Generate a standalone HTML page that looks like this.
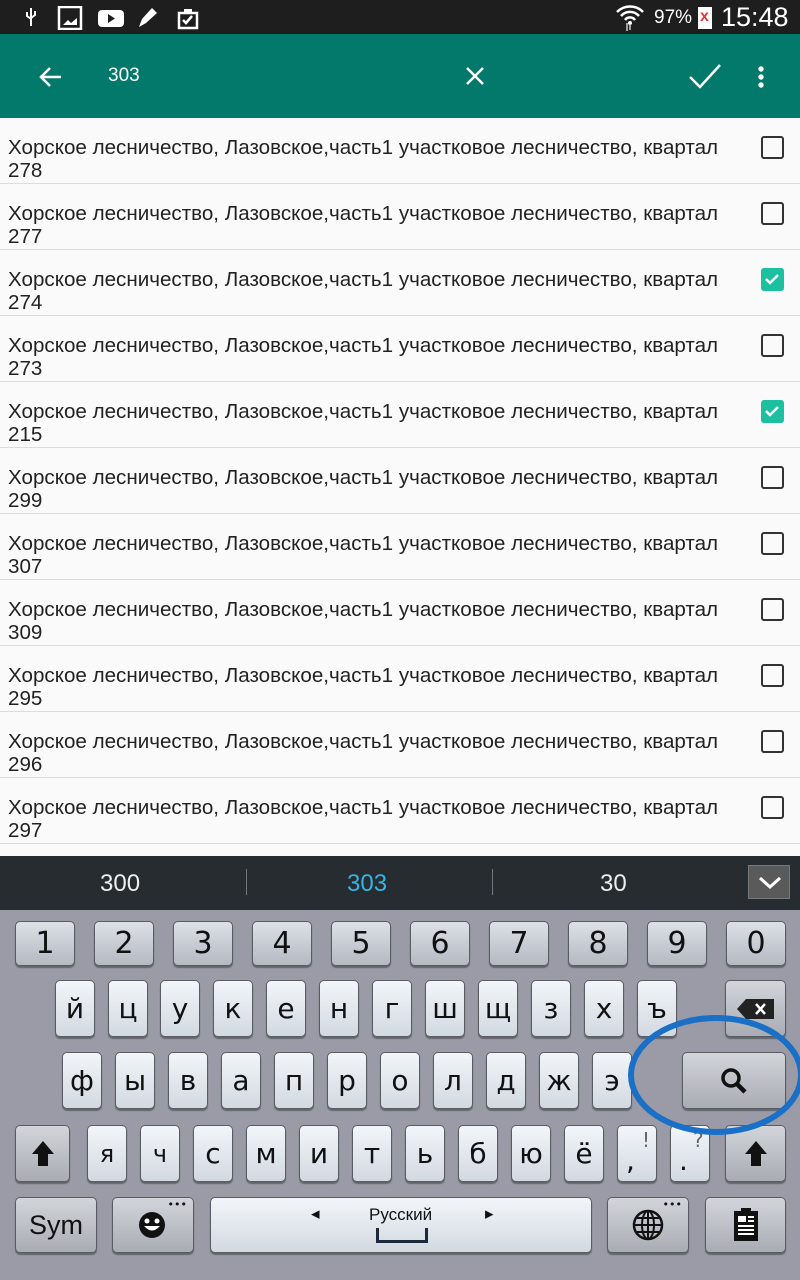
<!DOCTYPE html>
<html><head><meta charset="utf-8"><style>
*{margin:0;padding:0;box-sizing:border-box}
body{width:800px;height:1280px;overflow:hidden;background:#fafafa;font-family:"Liberation Sans","DejaVu Sans",sans-serif;position:relative}
.abs{position:absolute}
#sb{left:0;top:0;width:800px;height:34px;background:#1e1e1e;color:#fff}
#tb{left:0;top:34px;width:800px;height:84px;background:#02796b;color:#fff}
.row{position:absolute;left:0;width:800px;height:66px;border-bottom:1px solid #ddd}
.row .t{position:absolute;left:8px;top:18px;font-size:20.6px;line-height:23px;color:#222;width:728px}
.cb{position:absolute;left:761px;top:18px;width:23px;height:23px;border:2.5px solid #333;border-radius:3px}
.cb.on{background:#1cbf9f;border-color:#1cbf9f}
#sug{left:0;top:856px;width:800px;height:54px;background:#272c30}
#kb{left:0;top:910px;width:800px;height:370px;background:#9a9ba6}
.k{position:absolute;border:1px solid #5a5c64;border-radius:5px;box-shadow:0 2px 1px rgba(0,0,0,.35);display:flex;align-items:center;justify-content:center;color:#111;font-family:"DejaVu Sans",sans-serif}
.n{background:linear-gradient(#dde1e7,#b4b9c2);font-size:30px;height:45px;width:60px}
.l{background:linear-gradient(#f2f6fa,#d3d9e1);font-size:28px;width:40px;height:57px}
.f{background:linear-gradient(#d2d5da,#a9acb3)}
</style></head><body>
<div id="sb" class="abs">
 <svg class="abs" style="left:20px;top:6px" width="200" height="24" viewBox="0 0 200 24" fill="#fff">
  <path d="M11 2v18M7 6v4l4 3M15 5v4l-4 3" stroke="#fff" stroke-width="2" fill="none"/>
  <rect x="39" y="1" width="22" height="22" fill="none" stroke="#fff" stroke-width="2.5"/><path d="M43 19l5-5 3 3 6-5v7z"/>
  <rect x="78" y="4" width="26" height="17" rx="4"/><path d="M88 8v9l7-4.5z" fill="#1e1e1e"/>
  <path d="M119 21l3-8 10-11 5 5-11 10z"/>
  <rect x="159" y="7" width="18" height="15" fill="none" stroke="#fff" stroke-width="2.5"/><path d="M163 14l3 3 6-7" stroke="#fff" stroke-width="2.5" fill="none"/><rect x="164" y="3" width="8" height="4"/>
 </svg>
 <svg class="abs" style="left:615px;top:3px" width="30" height="28" viewBox="0 0 30 28"><path d="M2 9a18 18 0 0 1 26 0M6 13a12 12 0 0 1 18 0M10 17a6 6 0 0 1 10 0" stroke="#fff" stroke-width="2.5" fill="none"/><circle cx="15" cy="20" r="2" fill="#fff"/><path d="M12 20v8M15 27v-6" stroke="#ccc" stroke-width="1.5"/></svg>
 <div class="abs" style="left:654px;top:7px;font-size:19px">97%</div>
 <div class="abs" style="left:698px;top:7px;width:14px;height:22px;background:#fff"><span style="color:#e33;font-size:16px;font-weight:bold;position:absolute;left:2px;top:1px">x</span></div>
 <div class="abs" style="left:721px;top:2px;font-size:27px">15:48</div>
</div>
<div id="tb" class="abs">
 <svg class="abs" style="left:38px;top:30px" width="26" height="26" viewBox="0 0 26 26"><path d="M23 13H4M12 4l-9 9 9 9" stroke="#fff" stroke-width="2.5" fill="none"/></svg>
 <div class="abs" style="left:108px;top:31px;font-size:19px">303</div>
 <svg class="abs" style="left:465px;top:32px" width="20" height="20"><path d="M2 2l16 16M18 2L2 18" stroke="#fff" stroke-width="2.5"/></svg>
 <svg class="abs" style="left:688px;top:28px" width="34" height="28"><path d="M2 15l10 10L32 3" stroke="#fff" stroke-width="2.5" fill="none"/></svg>
 <svg class="abs" style="left:756px;top:31px" width="10" height="26" fill="#fff"><circle cx="5" cy="4" r="2.7"/><circle cx="5" cy="12" r="2.7"/><circle cx="5" cy="20" r="2.7"/></svg>
</div>
<div class="row" style="top:118px"><div class="t">Хорское лесничество, Лазовское,часть1 участковое лесничество, квартал 278</div><div class="cb"></div></div>
<div class="row" style="top:184px"><div class="t">Хорское лесничество, Лазовское,часть1 участковое лесничество, квартал 277</div><div class="cb"></div></div>
<div class="row" style="top:250px"><div class="t">Хорское лесничество, Лазовское,часть1 участковое лесничество, квартал 274</div><div class="cb on"><svg width="18" height="18" style="position:absolute;left:0;top:0"><path d="M3 9l4 4 8-8" stroke="#fff" stroke-width="2.5" fill="none"/></svg></div></div>
<div class="row" style="top:316px"><div class="t">Хорское лесничество, Лазовское,часть1 участковое лесничество, квартал 273</div><div class="cb"></div></div>
<div class="row" style="top:382px"><div class="t">Хорское лесничество, Лазовское,часть1 участковое лесничество, квартал 215</div><div class="cb on"><svg width="18" height="18" style="position:absolute;left:0;top:0"><path d="M3 9l4 4 8-8" stroke="#fff" stroke-width="2.5" fill="none"/></svg></div></div>
<div class="row" style="top:448px"><div class="t">Хорское лесничество, Лазовское,часть1 участковое лесничество, квартал 299</div><div class="cb"></div></div>
<div class="row" style="top:514px"><div class="t">Хорское лесничество, Лазовское,часть1 участковое лесничество, квартал 307</div><div class="cb"></div></div>
<div class="row" style="top:580px"><div class="t">Хорское лесничество, Лазовское,часть1 участковое лесничество, квартал 309</div><div class="cb"></div></div>
<div class="row" style="top:646px"><div class="t">Хорское лесничество, Лазовское,часть1 участковое лесничество, квартал 295</div><div class="cb"></div></div>
<div class="row" style="top:712px"><div class="t">Хорское лесничество, Лазовское,часть1 участковое лесничество, квартал 296</div><div class="cb"></div></div>
<div class="row" style="top:778px"><div class="t">Хорское лесничество, Лазовское,часть1 участковое лесничество, квартал 297</div><div class="cb"></div></div>

<div id="sug" class="abs">
 <div class="abs" style="left:100px;top:14px;font-size:24px;color:#eee">300</div>
 <div class="abs" style="left:246px;top:13px;width:1px;height:26px;background:#777"></div>
 <div class="abs" style="left:347px;top:14px;font-size:24px;color:#33b5e5">303</div>
 <div class="abs" style="left:492px;top:13px;width:1px;height:26px;background:#777"></div>
 <div class="abs" style="left:600px;top:14px;font-size:24px;color:#eee">30</div>
 <div class="abs" style="left:748px;top:9px;width:42px;height:34px;background:#5a5a5a;border:1px solid #777"><svg width="42" height="34"><path d="M11 12l10 9 10-9" stroke="#fff" stroke-width="3" fill="none"/></svg></div>
</div>
<div id="kb" class="abs">
 <div class="k n" style="left:15px;top:11px">1</div><div class="k n" style="left:94px;top:11px">2</div><div class="k n" style="left:173px;top:11px">3</div><div class="k n" style="left:252px;top:11px">4</div><div class="k n" style="left:331px;top:11px">5</div><div class="k n" style="left:410px;top:11px">6</div><div class="k n" style="left:489px;top:11px">7</div><div class="k n" style="left:568px;top:11px">8</div><div class="k n" style="left:647px;top:11px">9</div><div class="k n" style="left:726px;top:11px">0</div>

 <div class="k l" style="left:55px;top:70px">й</div><div class="k l" style="left:108px;top:70px">ц</div><div class="k l" style="left:160px;top:70px">у</div><div class="k l" style="left:213px;top:70px">к</div><div class="k l" style="left:266px;top:70px">е</div><div class="k l" style="left:319px;top:70px">н</div><div class="k l" style="left:372px;top:70px">г</div><div class="k l" style="left:425px;top:70px">ш</div><div class="k l" style="left:478px;top:70px">щ</div><div class="k l" style="left:531px;top:70px">з</div><div class="k l" style="left:584px;top:70px">х</div><div class="k l" style="left:637px;top:70px">ъ</div>
 <div class="k f" style="left:725px;top:70px;width:61px;height:57px"><svg width="40" height="22"><path d="M10 1h28v20H10L1 11z" fill="#222"/><path d="M20 6l9 10M29 6l-9 10" stroke="#fff" stroke-width="2.5"/></svg></div>

 <div class="k l" style="left:62px;top:142px">ф</div><div class="k l" style="left:115px;top:142px">ы</div><div class="k l" style="left:168px;top:142px">в</div><div class="k l" style="left:221px;top:142px">а</div><div class="k l" style="left:274px;top:142px">п</div><div class="k l" style="left:327px;top:142px">р</div><div class="k l" style="left:380px;top:142px">о</div><div class="k l" style="left:433px;top:142px">л</div><div class="k l" style="left:486px;top:142px">д</div><div class="k l" style="left:539px;top:142px">ж</div><div class="k l" style="left:592px;top:142px">э</div>
 <div class="k f" style="left:682px;top:142px;width:104px;height:57px"><svg width="30" height="30"><circle cx="12" cy="12" r="8" stroke="#111" stroke-width="3.5" fill="none"/><path d="M18 18l8 8" stroke="#111" stroke-width="4.5"/></svg></div>

 <div class="k f" style="left:15px;top:215px;width:55px;height:57px"><svg width="26" height="30"><path d="M13 2L2 15h6v12h10V15h6z" fill="#111"/></svg></div>
 <div class="k l" style="left:87px;top:215px;font-size:24px">я</div><div class="k l" style="left:140px;top:215px;font-size:24px">ч</div><div class="k l" style="left:193px;top:215px">с</div><div class="k l" style="left:246px;top:215px">м</div><div class="k l" style="left:299px;top:215px">и</div><div class="k l" style="left:352px;top:215px">т</div><div class="k l" style="left:405px;top:215px">ь</div><div class="k l" style="left:458px;top:215px">б</div><div class="k l" style="left:511px;top:215px">ю</div><div class="k l" style="left:564px;top:215px">ё</div>
 <div class="k l" style="left:617px;top:215px"><span style="position:absolute;left:8px;top:18px;font-size:28px">,</span><span style="position:absolute;left:24px;top:2px;font-size:20px;color:#666">!</span></div>
 <div class="k l" style="left:670px;top:215px"><span style="position:absolute;left:8px;top:18px;font-size:28px">.</span><span style="position:absolute;left:22px;top:2px;font-size:20px;color:#666">?</span></div>
 <div class="k f" style="left:725px;top:215px;width:61px;height:57px"><svg width="26" height="30"><path d="M13 2L2 15h6v12h10V15h6z" fill="#111"/></svg></div>

 <div class="k f" style="left:15px;top:287px;width:82px;height:56px;font-size:27px;font-family:'Liberation Sans',sans-serif">Sym</div>
 <div class="k f" style="left:112px;top:287px;width:82px;height:56px"><svg width="30" height="30"><circle cx="14" cy="15" r="13" fill="#111"/><circle cx="9" cy="11" r="2.5" fill="#fff"/><circle cx="19" cy="11" r="2.5" fill="#fff"/><path d="M6 16q8 9 16 0z" fill="#fff"/></svg><span style="position:absolute;right:6px;top:0;font-size:11px">•••</span></div>
 <div class="k l" style="left:210px;top:287px;width:382px;height:56px;font-family:'Liberation Sans',sans-serif;font-size:17px"><span style="position:absolute;left:100px;top:6px">◂</span><span style="position:absolute;left:158px;top:7px">Русский</span><span style="position:absolute;left:274px;top:6px">▸</span><span style="position:absolute;left:165px;top:30px;width:52px;height:15px;border:3px solid #1a2a3a;border-top:none"></span></div>
 <div class="k f" style="left:607px;top:287px;width:82px;height:56px"><svg width="34" height="34"><circle cx="17" cy="17" r="14" stroke="#111" stroke-width="2.5" fill="none"/><ellipse cx="17" cy="17" rx="6" ry="14" stroke="#111" stroke-width="2" fill="none"/><path d="M3 17h28M6 10h22M6 24h22M17 3v28" stroke="#111" stroke-width="2"/></svg><span style="position:absolute;right:6px;top:0;font-size:11px">•••</span></div>
 <div class="k f" style="left:705px;top:287px;width:81px;height:56px"><svg width="30" height="36"><rect x="10" y="1" width="10" height="4" fill="#111"/><rect x="3" y="4" width="24" height="30" fill="#111"/><rect x="7" y="9" width="8" height="6" fill="#fff"/><path d="M17 10h6M17 14h6M7 19h16M7 23h16M7 27h16" stroke="#fff" stroke-width="2"/></svg></div>
</div>
<svg class="abs" style="left:620px;top:1010px" width="190" height="135"><ellipse cx="96" cy="65" rx="85" ry="57" stroke="#1a70c6" stroke-width="6" fill="none"/></svg>
</body></html>
